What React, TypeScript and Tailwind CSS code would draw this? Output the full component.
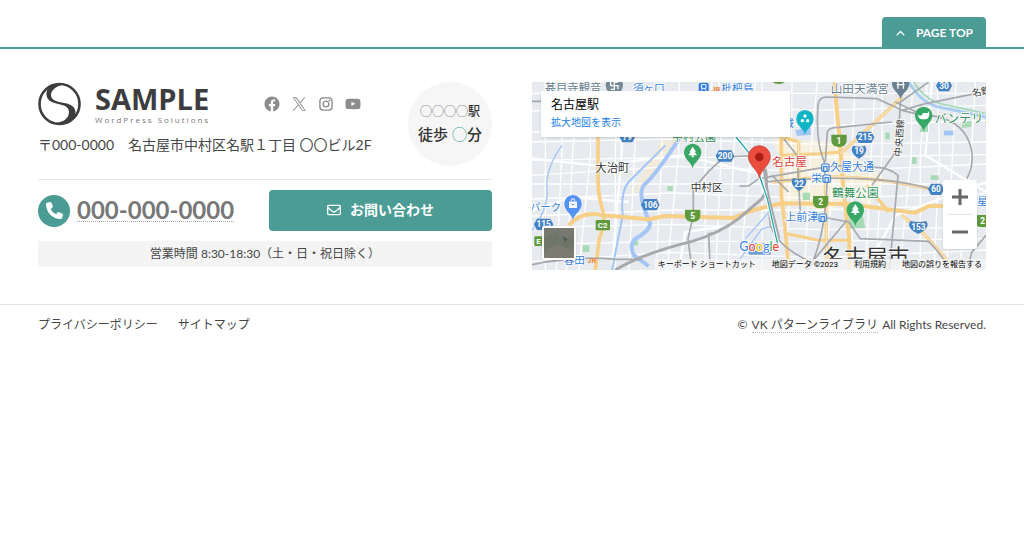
import React from "react";
import { FaPhone, FaRegEnvelope, FaAngleUp } from "react-icons/fa6";

const jpFont = "font-['Lato','Noto_Sans_CJK_JP',sans-serif]";

function Emblem() {
  return (
    <svg viewBox="0 0 44 44" className="h-[44px] w-[44px]" aria-hidden="true">
      <circle cx="21.500" cy="22" r="20" fill="none" stroke="#3d3d40" strokeWidth="2.600" />
      <path
        fill="#3d3d40"
        d="M27 2C15 0 8 5 8.500 13C9 20 17 21 24 23C30 24.500 32 28 30.500 33C29 38 23 41 14 41C27 45 37 40 37.500 31C37.500 24 32 22 25 20.800C18 19.500 13 18 13 12.500C13.500 7 20 3.500 27 2Z"
      />
    </svg>
  );
}

const socials = [
  {
    name: "Facebook",
    art: (
      <path d="M12 2C6.5 2 2 6.5 2 12c0 5 3.700 9.100 8.400 9.900v-7H7.900V12h2.500V9.800c0-2.500 1.500-3.900 3.800-3.900 1.100 0 2.200.2 2.200.2v2.100h-1.300c-1.200 0-1.600.8-1.600 1.600V12h2.800l-.4 2.900h-2.300v7C18.300 21.100 22 17 22 12c0-5.500-4.500-10-10-10z" />
    ),
  },
  {
    name: "X",
    art: (
      <path d="M13.982 10.622 20.540 3h-1.554l-5.693 6.618L8.745 3H3.500l6.876 10.007L3.500 21h1.554l6.012-6.989L15.868 21h5.245l-7.131-10.378Zm-2.128 2.474-.697-.997-5.543-7.930H8l4.474 6.400.697.996 5.815 8.318h-2.387l-4.745-6.787Z" />
    ),
  },
  {
    name: "Instagram",
    art: (
      <g>
        <rect x="3.900" y="3.900" width="16.200" height="16.200" rx="4.200" fill="none" stroke="currentColor" strokeWidth="1.800" />
        <circle cx="12" cy="12" r="3.800" fill="none" stroke="currentColor" strokeWidth="1.800" />
        <circle cx="16.800" cy="7.200" r="1.200" />
      </g>
    ),
  },
  {
    name: "YouTube",
    art: (
      <path d="M21.800 8.001s-.195-1.378-.795-1.985c-.760-.797-1.613-.801-2.004-.847-2.799-.202-6.997-.202-6.997-.202h-.009s-4.198 0-6.997.202c-.390.047-1.242.051-2.003.847C2.395 6.623 2.200 8.001 2.200 8.001S2 9.620 2 11.238v1.517c0 1.618.2 3.237.2 3.237s.195 1.378.795 1.985c.761.797 1.760.771 2.205.855 1.600.153 6.800.201 6.800.201s4.203-.006 7.001-.209c.391-.047 1.243-.051 2.004-.847.6-.607.795-1.985.795-1.985s.2-1.618.2-3.237v-1.517C22 9.620 21.800 8.001 21.800 8.001zM9.935 14.594l-.001-5.620 5.404 2.820-5.403 2.800z" />
    ),
  },
];

const verticals = [40, 82, 122, 168, 250, 300, 390, 432, 520, 560, 606, 650, 690, 770, 836, 905, 960, 1010, 1050, 1130, 1165, 1215, 1262, 1310];
const horizontals = [34, 78, 132, 180, 226, 262, 306, 342, 384, 436, 478, 520];

function Shield({ x, y, n }: { x: number; y: number; n: string }) {
  return (
    <g>
      <path d={`M${x - 23} ${y - 17}H${x + 23}V${y}Q${x + 23} ${y + 20} ${x} ${y + 20}Q${x - 23} ${y + 20} ${x - 23} ${y}Z`} fill="#5f9a3c" />
      <text x={x} y={y + 10} textAnchor="middle" fontSize="25" fontWeight="700" fill="#fff">{n}</text>
    </g>
  );
}

function Hex({ x, y, n, w = 28 }: { x: number; y: number; n: string; w?: number }) {
  return (
    <g>
      <path d={`M${x - w} ${y}L${x - w + 9} ${y - 17}H${x + w - 9}L${x + w} ${y}L${x + w - 9} ${y + 17}H${x - w + 9}Z`} fill="#4281c4" />
      <text x={x} y={y + 9} textAnchor="middle" fontSize="25" fontWeight="700" fill="#fff">{n}</text>
    </g>
  );
}

function Route({ x, y, n, w = 22 }: { x: number; y: number; n: string; w?: number }) {
  return (
    <g>
      <path d={`M${x - w + 4} ${y - 17}Q${x} ${y - 11} ${x + w - 4} ${y - 17}Q${x + w} ${y - 10} ${x + w} ${y - 4}Q${x + w - 4} ${y + 12} ${x} ${y + 22}Q${x - w + 4} ${y + 12} ${x - w} ${y - 4}Q${x - w} ${y - 10} ${x - w + 4} ${y - 17}Z`} fill="#4281c4" />
      <text x={x} y={y + 9} textAnchor="middle" fontSize="25" fontWeight="700" fill="#fff">{n}</text>
    </g>
  );
}

function Pin({ x, y, color, children }: { x: number; y: number; color: string; children?: React.ReactNode }) {
  return (
    <g transform={`translate(${x} ${y})`}>
      <path d="M0 48C-3 30-26 22-26 0A26 26 0 0 1 26 0C26 22 3 30 0 48Z" fill={color} />
      {children}
    </g>
  );
}

const tree = <path d="M0-17L10-2H6L13 9H3V15H-3V9H-13L-6-2H-10Z" fill="#fff" />;

function Station({ x, y }: { x: number; y: number }) {
  return (
    <g fill="none" stroke="#3f86dc" strokeWidth="3.500">
      <rect x={x - 11} y={y - 11} width="22" height="22" rx="4" fill="#e6effb" />
      <path d={`M${x - 5} ${y + 11}V${y - 3}H${x + 5}V${y + 11}`} />
    </g>
  );
}

function MapDrawing() {
  return (
    <svg
      viewBox="0 0 1362 564"
      preserveAspectRatio="xMidYMid slice"
      className="absolute inset-0 h-full w-full font-['Roboto','Noto_Sans_CJK_JP',sans-serif]"
      role="img"
      aria-label="名古屋駅周辺の地図"
    >
      <defs>
        <clipPath id="labels-area">
          <rect width="1362" height="530" />
        </clipPath>
      </defs>
      <rect width="1362" height="564" fill="#e7eaef" />
      <path d="M720 170L900 180L1060 290L1010 380L960 330L900 390L740 360L760 260Z" fill="#f6f0df" />
      <path d="M390 170L450 166L330 335L300 330Z" fill="#f1eadb" />
      <g stroke="#fff" strokeWidth="4" fill="none">
        {verticals.map((x, i) => (
          <path key={x} d={`M${x + (i % 3) * 10} 0L${x + (i % 2) * 8} 210L${x - (i % 4) * 9} 564`} />
        ))}
        {horizontals.map((y, i) => (
          <path key={y} d={`M0 ${y + (i % 3) * 9}L420 ${y - (i % 2) * 9}L860 ${y + (i % 2) * 7}L1362 ${y - (i % 3) * 8}`} />
        ))}
        <path strokeWidth="7" d="M0 230L190 250L450 220L680 275M0 385L120 345L290 360M250 0L270 200L240 564M440 564L460 450L600 430M1000 564L1090 400L1362 300M1200 0L1180 220L1362 330" />
      </g>
      <g fill="#a8dab5">
        <path d="M950 395L990 390L1000 438L955 440Z" />
        <path d="M1170 125H1188V150H1163Z" />
        <rect x="406" y="312" width="16" height="15" />
        <rect x="812" y="332" width="22" height="22" />
        <rect x="152" y="490" width="20" height="20" />
        <rect x="1060" y="152" width="13" height="20" />
        <rect x="1140" y="226" width="14" height="20" />
        <rect x="1196" y="280" width="24" height="14" />
        <path d="M1290 122L1318 116V134L1290 138Z" />
        <rect x="305" y="476" width="14" height="14" />
      </g>
      <g fill="none" stroke="#a3c6f7">
        <path strokeWidth="4" d="M0 445Q50 380 45 320T90 190M600 564L690 440L735 430M640 470L720 380" />
        <path strokeWidth="6" d="M400 190L290 300Q265 330 272 400L240 564" />
        <path strokeWidth="12" d="M445 165Q370 280 340 305T355 425Q350 450 310 470Q290 490 306 520L350 552" />
        <path strokeWidth="9" stroke="#a9cdef" d="M1130 0Q1170 65 1220 75T1362 105" />
        <path strokeWidth="5" stroke="#9fd8b5" d="M1145 0Q1180 55 1230 66T1362 95" />
      </g>
      <path d="M790 145L835 135L836 158L795 162Z" fill="#a3c6f7" />
      <path d="M1236 146H1264V160H1236Z" fill="#a3c6f7" />
      <g fill="none" stroke="#f8cf86" strokeWidth="11" strokeLinejoin="round">
        <path d="M198 0V290Q198 340 212 385Q222 420 202 470L190 564" />
        <path d="M110 430Q150 385 212 400L350 412L400 402L605 408Q660 380 755 364L945 366L1150 392L1190 372H1240" strokeWidth="12" />
        <path d="M748 160V340Q760 430 770 564" />
        <path d="M908 0Q915 100 922 160L935 330L952 470V564" strokeWidth="12" />
        <path d="M750 220L860 215L925 210M765 455L860 475H950" strokeWidth="9" />
      </g>
      <g fill="none" stroke="#f8cf86" strokeWidth="10">
        <path d="M1110 45L1030 120L925 215M720 300L870 285Q1010 280 1190 320M1110 400L1170 450L1250 540M1005 310L1070 390M800 175V330M880 300L885 564M750 165L795 178" />
      </g>
      <g fill="none" stroke="#fff" strokeWidth="2">
        <path d="M1110 45L1030 120L925 215M720 300L870 285Q1010 280 1190 320M1110 400L1170 450L1250 540M800 175V330M880 300L885 564" />
      </g>
      <g fill="none" stroke="#a7a9ac" strokeWidth="5">
        <path d="M250 564Q330 515 480 478Q560 455 620 410L690 350Q710 320 700 260" strokeWidth="9" />
        <path d="M0 548Q130 520 250 532H330" />
        <path d="M480 564L468 470L484 400V325Q530 260 580 225L650 222M535 564L530 455L560 450M622 312H650L680 290L840 262Q950 242 1030 256Q1070 256 1098 280Q1090 370 1072 564M700 300Q850 285 980 290T1200 322" />
        <path d="M880 300L877 240Q850 180 858 70Q860 45 885 45L1035 50L1110 85Q1170 100 1200 105M880 240L886 150Q890 136 920 136L1080 120M1020 310L1098 200L1105 60L1190 0M1110 85L1180 65L1330 35M1090 60L1170 98Q1290 105 1315 190Q1330 240 1305 290M870 405L950 420Q970 450 985 470L1190 478Q1240 530 1250 564M945 415L820 564M885 300Q880 470 830 564M0 58H30M1304 564L1320 510L1362 460" />
        <path d="M700 275L715 430Q740 500 840 540M720 280L770 330M755 170L795 220L805 390" />
      </g>
      <path d="M612 165L665 230L706 350L740 500" fill="none" stroke="#fff" strokeWidth="11" />
      <path d="M612 165L665 230L706 350L740 500" fill="none" stroke="#2ba6ac" strokeWidth="4" />
      <path d="M692 250L712 350L742 470" fill="none" stroke="#a7a9ac" strokeWidth="6" />
      <g fontSize="34" fill="#333" stroke="#fff" strokeWidth="5" paintOrder="stroke" strokeLinejoin="round">
        <text x="190" y="271">大治町</text>
        <text x="476" y="328" fontSize="32">中村区</text>
        <text x="1322" y="44" fontSize="28" transform="rotate(-12 1322 44)">名鉄</text>
        <text transform="translate(1108 224) rotate(-86)" fontSize="28">中央西線</text>
        <g clipPath="url(#labels-area)">
          <text x="872" y="548" fontSize="65">名古屋市</text>
        </g>
        <text x="720" y="252" fontSize="35" fill="#d93f3b">名古屋</text>
        <g fill="#2f9156">
          <text x="420" y="177" fontSize="33">中村公園</text>
          <text x="900" y="345" fontSize="35">鶴舞公園</text>
          <text x="1208" y="123" fontSize="36">バンテリン</text>
        </g>
        <g fill="#3680da">
          <text x="894" y="268" fontSize="33">久屋大通</text>
          <text x="838" y="299" fontSize="32">栄</text>
          <text x="760" y="418" fontSize="33">上前津</text>
          <text x="302" y="31" fontSize="32">須ヶ口</text>
          <text x="568" y="30" fontSize="32">枇杷島</text>
          <text x="-6" y="387" fontSize="31">パーク</text>
          <text x="95" y="546" fontSize="32">春田</text>
          <text x="1336" y="368" fontSize="32">星</text>
          <text x="754" y="134" fontSize="32">城</text>
        </g>
        <g fill="#68808f">
          <text x="38" y="31" fontSize="34">甚目寺観音</text>
          <text x="896" y="32" fontSize="35">山田天満宮</text>
        </g>
      </g>
      <text x="538" y="29" fontSize="23" fontWeight="700" fill="#f08336">JR</text>
      <text x="166" y="543" fontSize="22" fontWeight="700" fill="#f08336">JR</text>
      <Station x={880} y={257} />
      <Station x={884} y={290} />
      <Station x={872} y={407} />
      <rect x="500" y="2" width="30" height="28" rx="6" fill="#2f79df" />
      <path d="M508 8H522V19H508ZM507 27L511 22M523 27L519 22" fill="none" stroke="#fff" strokeWidth="3" />
      <Shield x={921} y={175} n="1" />
      <Shield x={866} y={359} n="2" />
      <Shield x={482} y={400} n="5" />
      <Shield x={1352} y={416} n="2" />
      <Shield x={740} y={-14} n="" />
      <Hex x={579} y={222} n="200" />
      <Hex x={355} y={368} n="106" />
      <Hex x={999} y={166} n="215" />
      <Hex x={1212} y={322} n="60" w={24} />
      <Hex x={1236} y={11} n="30" w={24} />
      <Hex x={35} y={427} n="115" w={29} />
      <Hex x={286} y={164} n="79" w={24} />
      <Route x={981} y={208} n="19" />
      <Route x={801} y={305} n="22" />
      <Route x={1159} y={434} n="153" w={28} />
      <rect x="191" y="414" width="43" height="31" rx="3" fill="#5f9a3c" />
      <text x="212" y="438" textAnchor="middle" fontSize="24" fontWeight="700" fill="#fff">C2</text>
      <rect x="7" y="463" width="36" height="29" rx="3" fill="#5f9a3c" />
      <text x="13" y="486" fontSize="24" fontWeight="700" fill="#fff">E</text>
      <Pin x={482} y={211} color="#37a865">{tree}</Pin>
      <Pin x={970} y={384} color="#37a865">{tree}</Pin>
      <Pin x={1175} y={100} color="#37a865">
        <path d="M-17-3Q-12 4-5-1L-2-7H13V-13L17-8Q17 12 4 12H-7Q-16 10-17-3Z" fill="#fff" />
      </Pin>
      <Pin x={819} y={110} color="#12b5c6">
        <circle cx="0" cy="-8" r="5" fill="#fff" />
        <circle cx="-8" cy="6" r="5" fill="#fff" />
        <circle cx="8" cy="6" r="5" fill="#fff" />
      </Pin>
      <Pin x={123} y={365} color="#5491f5">
        <path d="M-12-6H12V13H-12Z" fill="#fff" />
        <path d="M-5-6V-10Q-5-15 0-15T5-10V-6" fill="none" stroke="#fff" strokeWidth="3" />
        <path d="M-5 0Q0 7 5 0" fill="none" stroke="#5491f5" strokeWidth="3" />
      </Pin>
      <Pin x={1106} y={4} color="#68808f">
        <path d="M-14-6H14M-12 4H12M-8-6V16M8-6V16" stroke="#fff" strokeWidth="4" />
      </Pin>
      <circle cx="247" cy="10" r="26" fill="#748995" />
      <path d="M236 0V11H258V22M236 22H247V0H258" fill="none" stroke="#fff" strokeWidth="4" />
      <path d="M682 288C678 262 649 250 649 224A33 33 0 0 1 715 224C715 250 686 262 682 288Z" fill="#ea4d3d" stroke="#c43c31" strokeWidth="2" />
      <circle cx="682" cy="225" r="13" fill="#a91d17" />
      <rect x="650" y="484" width="66" height="34" fill="#3579cb" opacity=".7" />
      <text x="622" y="508" fontSize="38" fontWeight="500" stroke="#fff" strokeWidth="6" paintOrder="stroke" className="font-['Lato',sans-serif]">
        <tspan fill="#4285f4">G</tspan>
        <tspan fill="#ea4335">o</tspan>
        <tspan fill="#fbbc04">o</tspan>
        <tspan fill="#4285f4">g</tspan>
        <tspan fill="#34a853">l</tspan>
        <tspan fill="#ea4335">e</tspan>
      </text>
    </svg>
  );
}

function MapPanel() {
  return (
    <section aria-label="地図" className="relative h-[188px] overflow-hidden font-['Roboto','Noto_Sans_CJK_JP',sans-serif]">
      <MapDrawing />
      <div className="absolute top-[9px] left-[9px] h-[46px] w-[249px] bg-white px-[10px] pt-[6px] shadow">
        <p className="text-[12px] leading-[17px] text-black">名古屋駅</p>
        <a href="#map" className="block text-[10px] leading-[17px] text-[#1a82e8]">拡大地図を表示</a>
      </div>
      <button
        type="button"
        aria-label="航空写真を表示"
        className="absolute bottom-[10px] left-[10px] h-[34px] w-[34px] rounded-xs border-2 border-white bg-[#77786f] shadow"
      >
        <svg viewBox="0 0 30 30" className="h-full w-full" aria-hidden="true">
          <path d="M0 10L12 4L20 12L30 6V18L16 22L5 30H0Z" fill="#70756a" />
          <path d="M0 22L14 16L30 24V30H0Z" fill="#7b7b70" />
          <path d="M18 8L24 11L21 14Z" fill="#525c52" />
        </svg>
      </button>
      <div className="absolute right-[9px] bottom-[21px] flex w-[34px] flex-col rounded-xs bg-white px-1 shadow">
        <button type="button" aria-label="拡大" className="flex h-[34px] items-center justify-center text-[#666]">
          <svg viewBox="0 0 16 16" className="h-4 w-4" aria-hidden="true">
            <path d="M8 0V16M0 8H16" stroke="currentColor" strokeWidth="3" />
          </svg>
        </button>
        <button type="button" aria-label="縮小" className="flex h-[35px] items-center justify-center border-t border-[#e6e6e6] text-[#666]">
          <svg viewBox="0 0 16 16" className="h-4 w-4" aria-hidden="true">
            <path d="M0 8H16" stroke="currentColor" strokeWidth="3" />
          </svg>
        </button>
      </div>
      <div className="absolute right-0 bottom-0 flex h-[11px] items-center gap-4 bg-[#f5f5f5]/80 px-1 text-[8px] leading-[11px] whitespace-nowrap text-black">
        <button type="button">キーボード ショートカット</button>
        <span>地図データ ©2023</span>
        <a href="#terms">利用規約</a>
        <a href="#report">地図の誤りを報告する</a>
      </div>
    </section>
  );
}

export default function App() {
  return (
    <footer className={`bg-white text-[#464646] ${jpFont}`}>
      <div className="flex justify-end border-b-2 border-[#4a9c95] px-[38px] pt-[17px]">
        <a href="#top" className="flex h-[30px] w-[104px] items-center justify-center gap-[10px] rounded-t bg-[#4a9c95] pt-[2px] text-[12px] font-bold text-white">
          <FaAngleUp className="h-[11px] w-[11px]" aria-hidden="true" />
          PAGE TOP
        </a>
      </div>

      <div className="grid grid-cols-2 gap-10 px-[38px] pt-[33px] pb-[34px]">
        <div>
          <div className="flex justify-between border-b border-[#e8e8e8] pb-[13px]">
            <div>
              <div className="flex items-center">
                <a href="#home" className="flex items-center gap-[13px] font-['Open_Sans',sans-serif] text-[#3d3d40]">
                  <Emblem />
                  <span className="flex w-[120px] flex-col whitespace-nowrap">
                    <span className="text-[29px] leading-[30px] font-bold">SAMPLE</span>
                    <span className="text-[8px] leading-[11px] tracking-[2px] text-[#777]">WordPress Solutions</span>
                  </span>
                </a>
                <ul className="ml-[48px] flex gap-[9px] text-[#8c8c8c]">
                  {socials.map((s) => (
                    <li key={s.name}>
                      <a href={`#${s.name.toLowerCase()}`} aria-label={s.name}>
                        <svg viewBox="0 0 24 24" fill="currentColor" className="h-[18px] w-[18px]" aria-hidden="true">
                          {s.art}
                        </svg>
                      </a>
                    </li>
                  ))}
                </ul>
              </div>
              <p className="mt-[9px] text-[14px] leading-5 whitespace-nowrap">〒000-0000　名古屋市中村区名駅１丁目 〇〇ビル2F</p>
            </div>
            <div className="flex h-[84px] w-[84px] shrink-0 flex-col items-center justify-center rounded-full bg-[#f6f6f6] font-medium whitespace-nowrap text-[#333]">
              <p className="text-[12px] leading-5"><span className="font-light">◯◯◯◯</span>駅</p>
              <p className="text-[15px] leading-6">徒歩 <span className="text-[#2a9d95]">◯</span>分</p>
            </div>
          </div>

          <div className="mt-[10px] grid grid-cols-2 gap-2">
            <div className="flex items-center gap-[7px]">
              <span className="flex h-8 w-8 items-center justify-center rounded-full bg-[#4a9c95] text-white">
                <FaPhone className="h-[17px] w-[17px]" aria-hidden="true" />
              </span>
              <a href="tel:0000000000" className="border-b border-dotted border-[#aaa] text-[24px] leading-[22px] font-bold text-[#777]">000-000-0000</a>
            </div>
            <a href="#contact" className="flex h-[41px] items-center justify-center gap-[9px] rounded bg-[#4a9c95] pb-[2px] text-[14px] font-bold text-white">
              <FaRegEnvelope className="h-[14px] w-[14px]" aria-hidden="true" />
              お問い合わせ
            </a>
          </div>

          <p className="mt-[10px] bg-[#f4f4f4] text-center text-[12px] leading-[26px]">営業時間 8:30-18:30（土・日・祝日除く）</p>
        </div>

        <MapPanel />
      </div>

      <div className="flex items-center justify-between border-t border-[#e5e5e5] px-[38px] py-[10px] text-[12px] leading-5">
        <nav className="flex gap-5">
          <a href="#privacy">プライバシーポリシー</a>
          <a href="#sitemap">サイトマップ</a>
        </nav>
        <p className="flex items-center gap-1 text-[12px]">
          <span>©</span>
          <a href="#library" className="border-b border-dotted border-[#bbb] leading-[15px]">VK パターンライブラリ</a>
          <span>All Rights Reserved.</span>
        </p>
      </div>
    </footer>
  );
}
